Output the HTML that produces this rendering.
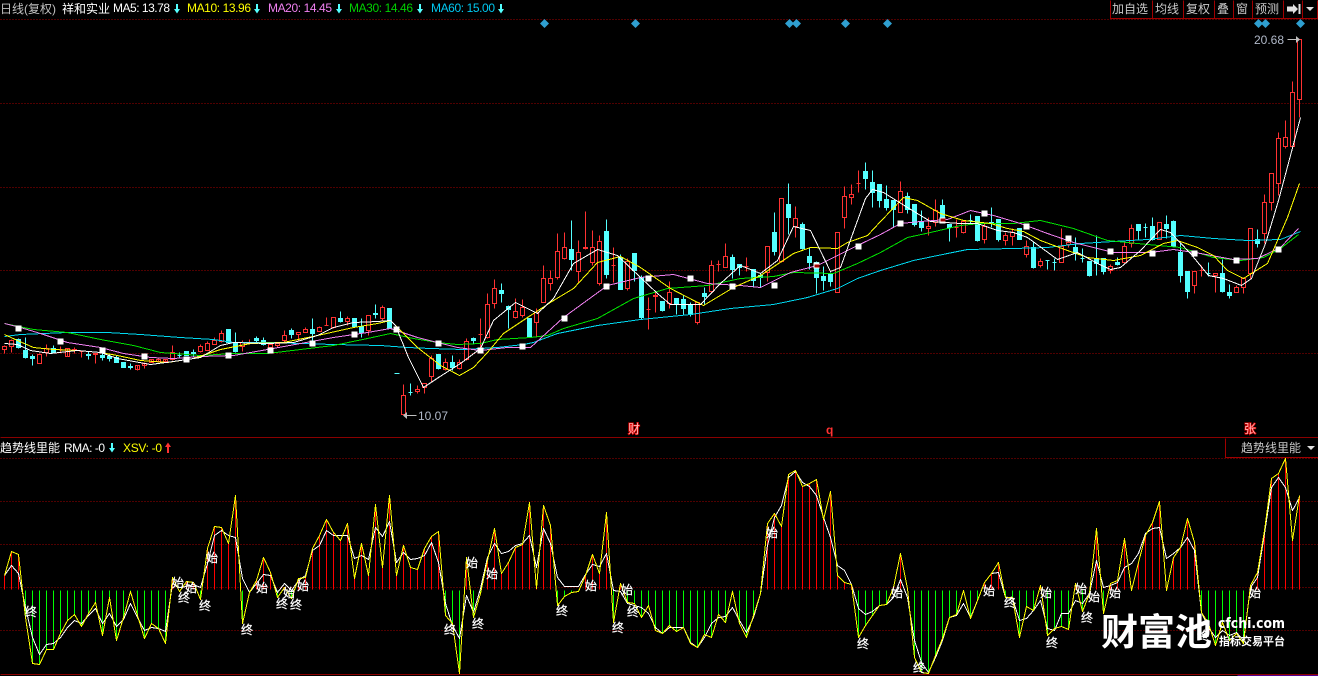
<!DOCTYPE html>
<html><head><meta charset="utf-8"><title>趋势线里能</title>
<style>
html,body{margin:0;padding:0;background:#000;width:1318px;height:676px;overflow:hidden}
svg{display:block;position:absolute;left:0;top:0}
text{font-family:"Liberation Sans","WenQuanYi Zen Hei","Noto Sans CJK SC",sans-serif;font-size:12px}
.cj{fill:#fff;stroke:#fff;stroke-width:.25;font-family:"WenQuanYi Zen Hei","Noto Sans CJK SC",sans-serif;text-anchor:middle}
.l{fill:none;stroke-width:1;stroke-linejoin:round}
.m{stroke:#e00000;stroke-width:1.4;paint-order:stroke;fill:#ffb8b8}
</style></head><body>
<svg width="1318" height="676" viewBox="0 0 1318 676" xmlns="http://www.w3.org/2000/svg">
<rect width="1318" height="676" fill="#000"/>
<g transform="translate(.5,.5)" shape-rendering="crispEdges">
<path fill="none" stroke="#a00000" stroke-dasharray="1 2" d="M0 19H1318M0 103H1318M0 187H1318M0 270H1318M0 353H1318M0 458H1318M0 501H1318M0 544H1318M0 587H1318M0 630H1318"/>
<path fill="none" stroke="#8a0000" d="M0 437H1318M0 674H1318"/>
<path fill="none" stroke="#500090" d="M1237 675H1318"/>
<!-- cyan candles -->
<path fill="#54ffff" stroke="#54ffff" d="M18 338V348M16 339h4V347h-4zM25 337V358M23 350h4V357h-4zM32 354V365M30 356h4V358h-4zM53 345V352M51 348h4V352h-4zM88 351V359M86 354h4V355h-4zM102 353V360M100 355h4V357h-4zM109 353V361M107 356h4V358h-4zM116 355V362M114 357h4V362h-4zM123 362V367M121 362h4V367h-4zM130 363V369M128 366h4V367h-4zM179 352V358M177 355h4M186 351V355M184 351h4V355h-4zM193 349V356M191 352h4V353h-4zM228 329V342M226 329h4V342h-4zM235 332V352M233 342h4V351h-4zM256 336V343M254 338h4V340h-4zM263 337V345M261 340h4V344h-4zM291 328V338M289 330h4V334h-4zM312 318V343M310 329h4V333h-4zM340 311V322M338 318h4V321h-4zM354 318V326M352 318h4V326h-4zM361 318V337M359 326h4V332h-4zM375 304V318M373 313h4V314h-4zM389 308V328M387 308h4V328h-4zM410 383V395M408 392h4M438 354V369M436 354h4V368h-4zM452 355V370M450 362h4V367h-4zM473 337V343M471 338h4V340h-4zM501 283V302M499 290h4V293h-4zM508 305V328M506 306h4V309h-4zM529 318V337M527 318h4V336h-4zM571 220V270M569 249h4V259h-4zM606 219V278M604 231h4V274h-4zM620 254V289M618 257h4V289h-4zM634 253V281M632 253h4V270h-4zM641 275V319M639 277h4V317h-4zM662 301V311M660 301h4V310h-4zM676 298V314M674 298h4V303h-4zM683 295V314M681 299h4V308h-4zM690 302V316M688 305h4V314h-4zM704 287V304M702 293h4V296h-4zM732 254V278M730 257h4V269h-4zM739 264V275M737 264h4V267h-4zM753 269V287M751 269h4V280h-4zM760 273V287M758 275h4V277h-4zM774 212V255M772 232h4V251h-4zM788 183V234M786 204h4V217h-4zM802 222V249M800 224h4V248h-4zM809 247V269M807 256h4V262h-4zM816 261V293M814 262h4V277h-4zM823 266V290M821 276h4V280h-4zM830 272V286M828 273h4V281h-4zM865 162V189M863 171h4V178h-4zM872 170V207M870 182h4V192h-4zM879 184V207M877 184h4V200h-4zM886 185V210M884 199h4V207h-4zM893 200V227M891 200h4V209h-4zM907 192V213M905 196h4V209h-4zM914 204V226M912 204h4V224h-4zM921 210V231M919 221h4V227h-4zM942 199V223M940 205h4V222h-4zM949 224V241M947 224h4V227h-4zM970 214V223M968 220h4M977 216V241M975 216h4V240h-4zM991 207V227M989 222h4V223h-4zM998 219V241M996 219h4V239h-4zM1019 228V239M1017 228h4V239h-4zM1033 242V268M1031 247h4V267h-4zM1047 260V269M1045 260h4M1054 258V270M1052 262h4M1075 237V260M1073 247h4V253h-4zM1082 248V262M1080 258h4M1089 261V276M1087 261h4V275h-4zM1096 235V275M1094 258h4V263h-4zM1103 258V274M1101 258h4V271h-4zM1117 257V265M1115 262h4V264h-4zM1138 224V239M1136 224h4V230h-4zM1145 223V237M1143 227h4M1152 217V240M1150 226h4V239h-4zM1166 215V238M1164 224h4V228h-4zM1173 220V246M1171 221h4V246h-4zM1180 242V282M1178 252h4V275h-4zM1187 271V298M1185 271h4V291h-4zM1208 262V276M1206 273h4M1222 259V292M1220 273h4V291h-4zM1229 284V298M1227 292h4V295h-4zM1257 229V247M1255 239h4V243h-4z"/>
<!-- red candles -->
<path fill="#000" stroke="#ff3232" d="M4 345V346M4 349V353M2 346h4V349h-4zM11 339V340M11 346V352M9 340h4V346h-4zM39 353V354M37 354h4V363h-4zM46 344V348M46 352V356M44 348h4V352h-4zM60 346V352M58 349h4M67 348V356M65 348h4V356h-4zM74 347V353M72 349h4V350h-4zM81 350V357M79 351h4M95 353V363M93 353h4V354h-4zM137 365V370M135 365h4V369h-4zM144 362V368M142 363h4V365h-4zM151 359V362M149 359h4V362h-4zM158 357V362M156 359h4V361h-4zM165 359V361M163 359h4V361h-4zM172 345V352M172 359V360M170 352h4V359h-4zM200 344V346M200 351V352M198 346h4V351h-4zM207 341V343M205 343h4V350h-4zM214 337V340M212 340h4V344h-4zM221 330V333M221 341V342M219 333h4V341h-4zM242 340V342M242 346V351M240 342h4V346h-4zM249 339V344M247 342h4V343h-4zM270 343V344M270 347V349M268 344h4V347h-4zM277 342V343M277 345V347M275 343h4V345h-4zM284 330V335M284 340V342M282 335h4V340h-4zM298 334V340M296 332h4V334h-4zM305 327V329M303 329h4V332h-4zM319 326V327M317 327h4V331h-4zM326 317V325M324 325h4M333 327V328M331 317h4V327h-4zM347 316V318M347 321V325M345 318h4V321h-4zM368 330V335M366 315h4V330h-4zM382 305V307M382 318V320M380 307h4V318h-4zM403 384V395M401 395h4V414h-4zM417 385V389M417 391V393M415 389h4V391h-4zM424 387V393M422 383h4V387h-4zM431 355V358M431 376V381M429 358h4V376h-4zM445 358V362M445 369V370M443 362h4V369h-4zM459 359V362M459 368V369M457 362h4V368h-4zM466 338V341M466 359V360M464 341h4V359h-4zM480 318V347M478 334h4M487 293V304M487 337V338M485 304h4V337h-4zM494 279V288M494 303V308M492 288h4V303h-4zM515 298V311M515 317V318M513 311h4V317h-4zM522 299V307M522 315V317M520 307h4V315h-4zM536 308V312M536 322V336M534 312h4V322h-4zM543 265V278M541 278h4V302h-4zM550 270V278M550 283V290M548 278h4V283h-4zM557 233V251M557 277V279M555 251h4V277h-4zM564 232V247M564 258V259M562 247h4V258h-4zM578 240V252M578 271V283M576 252h4V271h-4zM585 211V249M583 247h4V248h-4zM592 230V247M592 262V265M590 247h4V262h-4zM599 235V241M599 283V285M597 241h4V283h-4zM613 247V282M611 265h4M627 258V261M627 288V290M625 261h4V288h-4zM648 297V329M646 309h4M655 292V312M653 295h4V296h-4zM669 281V292M669 303V308M667 292h4V303h-4zM697 322V324M695 302h4V322h-4zM711 260V265M711 291V293M709 265h4V291h-4zM718 260V271M716 264h4M725 243V256M723 256h4V267h-4zM746 257V271M744 266h4M767 272V281M765 246h4V272h-4zM781 261V262M779 198h4V261h-4zM795 206V218M795 226V237M793 218h4V226h-4zM835 232h4V292h-4zM844 186V196M844 217V228M842 196h4V217h-4zM851 184V194M851 197V204M849 194h4V197h-4zM858 170V192M856 183h4M898 191h4V212h-4zM900 181V191M928 217V226M928 228V235M926 226h4V228h-4zM935 199V210M935 222V226M933 210h4V222h-4zM956 219V237M954 227h4M963 220V221M963 232V233M961 221h4V232h-4zM984 222V226M984 239V243M982 226h4V239h-4zM1005 232V235M1005 240V245M1003 235h4V240h-4zM1012 228V232M1012 236V245M1010 232h4V236h-4zM1026 240V246M1026 254V257M1024 246h4V254h-4zM1040 258V261M1040 265V267M1038 261h4V265h-4zM1061 228V246M1059 246h4V262h-4zM1068 235V242M1068 244V247M1066 242h4V244h-4zM1110 264V266M1110 270V273M1108 266h4V270h-4zM1124 242V246M1122 246h4V262h-4zM1131 224V228M1131 243V247M1129 228h4V243h-4zM1157 222h4V239h-4zM1194 285V293M1192 271h4V285h-4zM1201 265V276M1199 270h4M1215 275V292M1213 273h4V275h-4zM1236 285V287M1234 287h4V292h-4zM1243 277V278M1243 287V293M1241 278h4V287h-4zM1250 273V279M1248 228h4V273h-4zM1264 194V202M1264 233V243M1262 202h4V233h-4zM1271 202V210M1269 173h4V202h-4zM1278 132V138M1278 183V195M1276 138h4V183h-4zM1285 120V137M1285 146V148M1283 137h4V146h-4zM1292 81V92M1290 92h4V146h-4zM1299 99V117M1297 39h4V99h-4z"/>
<!-- volume bars -->
<path fill="none" stroke="#00ff00" d="M25 590V617M32 590V663M39 590V664M46 590V649M53 590V649M60 590V633M67 590V620M74 590V614M81 590V626M88 590V613M95 590V602M102 590V635M109 590V597M116 590V640M123 590V617M130 590V591M137 590V615M144 590V638M151 590V623M158 590V628M165 590V643M179 590V591M200 590V599M242 590V623M249 590V592M277 590V597M291 590V598M445 590V615M452 590V623M459 590V673M473 590V617M480 590V593M557 590V605M564 590V596M571 590V592M578 590V591M613 590V622M627 590V602M634 590V603M641 590V617M648 590V605M655 590V630M662 590V633M669 590V625M676 590V631M683 590V627M690 590V643M697 590V647M704 590V634M711 590V637M718 590V614M725 590V622M732 590V591M739 590V623M746 590V637M753 590V615M760 590V593M858 590V637M865 590V625M872 590V615M879 590V605M886 590V604M914 590V657M921 590V672M928 590V673M935 590V655M942 590V638M949 590V617M956 590V614M970 590V618M977 590V600M1005 590V597M1012 590V597M1019 590V637M1026 590V606M1033 590V610M1047 590V635M1054 590V628M1061 590V626M1068 590V629M1082 590V611M1089 590V593M1103 590V613M1201 590V612M1208 590V623M1215 590V645M1222 590V622M1229 590V640M1236 590V633M1243 590V643"/>
<path fill="none" stroke="#ff0000" d="M4 589V575M11 589V551M18 589V554M172 589V577M186 589V581M193 589V582M207 589V548M214 589V526M221 589V527M228 589V543M235 589V495M256 589V580M263 589V557M270 589V572M284 589V587M298 589V578M305 589V577M312 589V548M319 589V535M326 589V519M333 589V532M340 589V540M347 589V523M354 589V578M361 589V543M368 589V575M375 589V504M382 589V567M389 589V495M396 589V575M403 589V545M410 589V567M417 589V569M424 589V548M431 589V536M438 589V531M466 589V557M487 589V560M494 589V528M501 589V573M508 589V562M515 589V547M522 589V544M529 589V502M536 589V588M543 589V505M550 589V525M585 589V575M592 589V554M599 589V573M606 589V512M620 589V583M767 589V523M774 589V513M781 589V526M788 589V474M795 589V470M802 589V486M809 589V483M816 589V479M823 589V519M830 589V491M837 589V575M844 589V582M851 589V584M893 589V587M900 589V553M907 589V588M984 589V582M991 589V573M998 589V562M1040 589V585M1075 589V583M1096 589V528M1110 589V583M1117 589V580M1124 589V538M1131 589V586M1138 589V562M1145 589V535M1152 589V522M1159 589V501M1166 589V586M1173 589V557M1180 589V547M1187 589V518M1194 589V542M1250 589V585M1257 589V572M1264 589V530M1271 589V478M1278 589V473M1285 589V458M1292 589V540M1299 589V495"/>
<!-- MA lines -->
<polyline class="l" stroke="#00d8f0" points="4,336 20,334 67,332 107,332 140,334 180,337 213,339 233,342 267,342 300,343 333,344 380,345 407,347 430,348 463,349 497,347 523,344 533,342 557,333 597,325 640,319 690,314 730,308 773,304 807,297 837,288 857,278 880,270 913,260 947,253 967,249 1013,248 1047,247 1080,243 1113,241 1147,239 1180,235 1213,238 1247,240 1280,239 1300,231"/>
<polyline class="l" stroke="#00e000" points="4,323 33,329 67,332 100,339 133,345 160,352 200,355 233,353 267,353 300,349 333,345 367,338 390,333 413,338 437,342 457,344 480,343 497,339 530,337 547,335 563,328 597,318 633,298 667,288 707,285 740,278 773,276 793,272 833,273 857,263 880,252 907,237 930,232 960,225 980,223 1013,223 1040,220 1073,228 1107,240 1147,244 1180,247 1213,257 1240,260 1263,257 1280,248 1298,234"/>
<polyline class="l" stroke="#f080f0" points="4,323 20,327 40,333 67,342 100,347 123,353 150,357 173,358 200,356 233,355 267,349 300,343 333,337 367,332 390,328 417,337 437,342 457,347 480,350 507,347 530,347 563,317 607,285 640,277 673,274 707,283 740,285 760,287 790,272 817,265 857,245 880,234 900,223 920,221 947,219 970,210 993,215 1020,223 1047,233 1073,242 1113,252 1150,252 1173,249 1200,253 1233,259 1257,258 1280,247 1298,228"/>
<polyline class="l" stroke="#ffff00" points="4,334 17,340 33,347 53,349 77,350 100,352 117,355 140,360 167,362 193,358 220,349 250,343 283,342 317,335 353,327 377,323 390,320 400,330 417,347 440,365 459,375 473,367 487,352 503,333 527,317 553,300 573,288 597,262 620,256 640,267 670,288 703,305 733,287 760,275 793,253 810,247 837,248 847,242 867,235 880,221 903,197 917,200 940,213 963,220 990,223 1007,228 1023,231 1040,240 1067,250 1087,257 1113,260 1140,255 1163,243 1177,240 1197,247 1213,255 1227,270 1243,278 1267,263 1287,217 1299,183"/>
<!-- white squares on MA20 -->
<path fill="#fff" d="M15 325h6v6h-6zM57 338h6v6h-6zM99 347h6v6h-6zM141 353h6v6h-6zM183 356h6v6h-6zM225 352h6v6h-6zM267 347h6v6h-6zM309 340h6v6h-6zM351 331h6v6h-6zM393 326h6v6h-6zM435 340h6v6h-6zM477 347h6v6h-6zM519 343h6v6h-6zM561 315h6v6h-6zM603 283h6v6h-6zM645 275h6v6h-6zM687 275h6v6h-6zM729 283h6v6h-6zM771 282h6v6h-6zM813 262h6v6h-6zM855 243h6v6h-6zM897 220h6v6h-6zM939 217h6v6h-6zM981 210h6v6h-6zM1023 223h6v6h-6zM1065 235h6v6h-6zM1107 248h6v6h-6zM1149 250h6v6h-6zM1191 250h6v6h-6zM1233 257h6v6h-6zM1275 246h6v6h-6z"/>
<path fill="#a00000" d="M814 264h5v3h-5zM940 218h5v3h-5z"/>
<polyline class="l" stroke="#ffffff" points="4,343 17,344 30,350 50,353 77,350 100,352 117,358 150,364 173,361 200,357 220,345 233,342 267,343 293,342 317,335 333,327 353,322 377,321 390,320 395,325 408,357 423,387 438,377 460,363 480,348 493,320 515,302 527,308 537,313 553,298 573,263 597,249 617,255 640,277 657,293 670,304 700,304 720,283 740,265 760,273 777,260 793,226 810,230 830,271 840,267 865,198 872,189 883,192 907,207 930,221 960,223 977,223 997,230 1013,232 1027,237 1057,259 1077,252 1097,263 1110,269 1120,267 1140,250 1160,229 1170,232 1190,253 1208,275 1223,278 1241,285 1251,278 1265,243 1278,200 1290,155 1300,117"/>
<path fill="none" stroke="#54ffff" d="M394 373h5"/>
<!-- indicator lines -->
<polyline class="l" stroke="#ffffff" points="4,575 11,565 18,573 25,607 32,637 39,654 46,644 53,643 60,637 67,627 74,620 81,623 88,615 95,608 102,623 109,613 116,626 123,619 130,603 137,617 144,630 151,627 158,628 165,631 172,583 179,587 186,586 193,584 200,587 207,563 214,535 221,530 228,535 235,537 242,578 249,592 256,583 263,574 270,575 277,592 284,583 291,590 298,580 305,575 312,550 319,545 326,530 333,535 340,535 347,535 354,558 361,555 368,559 375,527 382,536 389,521 396,562 403,552 410,559 417,558 424,555 431,542 438,562 445,603 452,625 459,638 466,595 473,612 480,588 487,557 494,543 501,553 508,551 515,545 522,543 529,535 536,567 543,528 550,543 557,577 564,586 571,586 578,586 585,574 592,564 599,566 606,553 613,590 620,591 627,603 634,605 641,607 648,613 655,627 662,633 669,627 676,627 683,627 690,642 697,647 704,637 711,623 718,617 725,616 732,607 739,620 746,632 753,617 760,593 767,545 774,517 781,505 788,477 795,471 802,482 809,486 816,495 823,517 830,537 837,565 844,570 851,584 858,608 865,614 872,611 879,605 886,604 893,597 900,579 907,597 914,640 921,662 928,672 935,657 942,640 949,617 956,615 963,603 970,617 977,600 984,582 991,573 998,572 1005,597 1012,598 1019,620 1026,618 1033,610 1040,600 1047,628 1054,630 1061,613 1068,613 1075,600 1082,603 1089,593 1096,560 1103,587 1110,585 1117,582 1124,567 1131,563 1138,553 1145,533 1152,528 1159,527 1166,558 1173,553 1180,547 1187,537 1194,550 1201,612 1208,627 1215,637 1222,630 1229,635 1236,632 1243,640 1250,587 1257,577 1264,533 1271,487 1278,477 1285,487 1292,510 1299,497"/>
<polyline class="l" stroke="#ffff00" points="4,575 11,551 18,554 25,617 32,663 39,664 46,649 53,649 60,633 67,620 74,614 81,626 88,613 95,602 102,635 109,597 116,640 123,617 130,591 137,615 144,638 151,623 158,628 165,643 172,577 179,591 186,581 193,582 200,599 207,548 214,526 221,527 228,543 235,495 242,623 249,592 256,580 263,557 270,572 277,597 284,587 291,598 298,578 305,577 312,548 319,535 326,519 333,532 340,540 347,523 354,578 361,543 368,575 375,504 382,567 389,495 396,575 403,545 410,567 417,569 424,548 431,536 438,531 445,615 452,623 459,673 466,557 473,617 480,593 487,560 494,528 501,573 508,562 515,547 522,544 529,502 536,588 543,505 550,525 557,605 564,596 571,592 578,591 585,575 592,554 599,573 606,512 613,622 620,583 627,602 634,603 641,617 648,605 655,630 662,633 669,625 676,631 683,627 690,643 697,647 704,634 711,637 718,614 725,622 732,591 739,623 746,637 753,615 760,593 767,523 774,513 781,526 788,474 795,470 802,486 809,483 816,479 823,519 830,491 837,575 844,582 851,584 858,637 865,625 872,615 879,605 886,604 893,587 900,553 907,588 914,657 921,672 928,673 935,655 942,638 949,617 956,614 963,590 970,618 977,600 984,582 991,573 998,562 1005,597 1012,597 1019,637 1026,606 1033,610 1040,585 1047,635 1054,628 1061,626 1068,629 1075,583 1082,611 1089,593 1096,528 1103,613 1110,583 1117,580 1124,538 1131,590 1138,562 1145,535 1152,522 1159,501 1166,590 1173,557 1180,547 1187,518 1194,542 1201,612 1208,623 1215,645 1222,622 1229,640 1236,633 1243,643 1250,585 1257,572 1264,530 1271,478 1278,473 1285,458 1292,540 1299,495"/>
<!-- top-right buttons -->
<path fill="none" stroke="#a00000" d="M1110 0V18H1317V0M1152 0V18M1183 0V18M1214 0V18M1233 0V18M1252 0V18M1283 0V18M1302 0V18M1225 438V457H1318"/>
<!-- price arrows -->
<path fill="none" stroke="#c0c0c0" d="M1287 39H1297M405 415H416"/>
</g>
<path fill="#c0c0c0" d="M1296 36l4 3.500-4 3.500zM403 415.500l4-3.500v7z"/>
<!-- diamonds -->
<path fill="#2f9fd0" d="M544.500 19l4.500 4.500-4.500 4.500-4.500-4.500zM635.500 19l4.500 4.500-4.500 4.500-4.500-4.500zM789.500 19l4.500 4.500-4.500 4.500-4.500-4.500zM796.500 19l4.500 4.500-4.500 4.500-4.500-4.500zM845.500 19l4.500 4.500-4.500 4.500-4.500-4.500zM887.500 19l4.500 4.500-4.500 4.500-4.500-4.500zM1258.500 19l4.500 4.500-4.500 4.500-4.500-4.500zM1265.500 19l4.500 4.500-4.500 4.500-4.500-4.500zM1300.500 19l4.500 4.500-4.500 4.500-4.500-4.500z"/>
<!-- signal labels -->
<g class="labels">
<text class="cj" x="31" y="616">终</text><text class="cj" x="178" y="587">始</text><text class="cj" x="191" y="592">始</text><text class="cj" x="184" y="602">终</text><text class="cj" x="205" y="610">终</text><text class="cj" x="212" y="562">始</text><text class="cj" x="247" y="634">终</text><text class="cj" x="262" y="592">始</text><text class="cj" x="282" y="608">终</text><text class="cj" x="289" y="597">始</text><text class="cj" x="296" y="609">终</text><text class="cj" x="303" y="590">始</text>
<text class="cj" x="450" y="634">终</text><text class="cj" x="472" y="567">始</text><text class="cj" x="492" y="578">始</text><text class="cj" x="478" y="628">终</text><text class="cj" x="562" y="615">终</text><text class="cj" x="591" y="590">始</text><text class="cj" x="618" y="632">终</text><text class="cj" x="627" y="594">始</text><text class="cj" x="633" y="616">终</text><text class="cj" x="772" y="537">始</text><text class="cj" x="863" y="648">终</text>
<text class="cj" x="897" y="597">始</text><text class="cj" x="919" y="672">终</text><text class="cj" x="989" y="595">始</text><text class="cj" x="1010" y="607">终</text><text class="cj" x="1046" y="597">始</text><text class="cj" x="1052" y="647">终</text><text class="cj" x="1081" y="593">始</text><text class="cj" x="1094" y="601">始</text><text class="cj" x="1087" y="622">终</text><text class="cj" x="1115" y="597">始</text><text class="cj" x="1203" y="640">终</text><text class="cj" x="1255" y="597">始</text>
</g>
<!-- header -->
<text x="0" y="13" fill="#c0c0c0">日线(复权)</text>
<text x="62" y="13" fill="#fff">祥和实业</text>
<text x="113" y="12" fill="#fff" textLength="57">MA5: 13.78</text>
<text x="187" y="12" fill="#ffff00" textLength="64">MA10: 13.96</text>
<text x="268" y="12" fill="#f080f0" textLength="64">MA20: 14.45</text>
<text x="349" y="12" fill="#00d000" textLength="64">MA30: 14.46</text>
<text x="431" y="12" fill="#00c8f0" textLength="64">MA60: 15.00</text>
<path fill="#54ffff" d="M176 4h2v5h2l-3 4.500-3-4.500h2zM256 4h2v5h2l-3 4.500-3-4.500h2zM338 4h2v5h2l-3 4.500-3-4.500h2zM419 4h2v5h2l-3 4.500-3-4.500h2zM500 4h2v5h2l-3 4.500-3-4.500h2zM111 443h2v5h2l-3 4.500-3-4.500h2z"/>
<path fill="#ff3232" d="M167 453h2v-6h2l-3-4.500-3 4.500h2z"/>
<!-- buttons text -->
<g fill="#c8c8c8">
<text x="1112" y="13">加自选</text><text x="1155" y="13">均线</text><text x="1186" y="13">复权</text><text x="1217" y="13">叠</text><text x="1236" y="13">窗</text><text x="1255" y="13">预测</text>
<text x="1241" y="452">趋势线里能</text>
</g>
<path fill="#e0e0e0" d="M1287 6.500h6V4l5 5-5 5v-2.500h-6zM1298.500 4h2v10h-2z"/>
<path fill="#e0e0e0" d="M1306 7h8l-4 4zM1307 446h8l-4 4z"/>
<text x="1254" y="44" fill="#b0b8c8">20.68</text>
<text x="418" y="420" fill="#b0b8c8">10.07</text>
<text x="628" y="433" class="m">财</text>
<text x="826" y="434" fill="#ff3232" font-weight="bold">q</text>
<text x="1244" y="433" class="m">张</text>
<!-- lower legend -->
<text x="0" y="452" fill="#fff">趋势线里能</text>
<text x="64" y="452" fill="#fff" textLength="41">RMA: -0</text>
<text x="123" y="452" fill="#ffff00" textLength="39">XSV: -0</text>
<!-- watermark -->
<text x="1101" y="645" fill="#fff" style="font-family:'Noto Sans CJK SC',sans-serif;font-size:37px;font-weight:700">财富池</text>
<text x="1218" y="628" fill="#fff" textLength="67" lengthAdjust="spacingAndGlyphs" style="font-family:'DejaVu Sans','Liberation Sans',sans-serif;font-size:14px;font-weight:700">cfchi.com</text>
<text x="1219" y="645" fill="#fff" style="font-family:'Noto Sans CJK SC',sans-serif;font-size:11px;font-weight:700">指标交易平台</text>
</svg>
</body></html>
